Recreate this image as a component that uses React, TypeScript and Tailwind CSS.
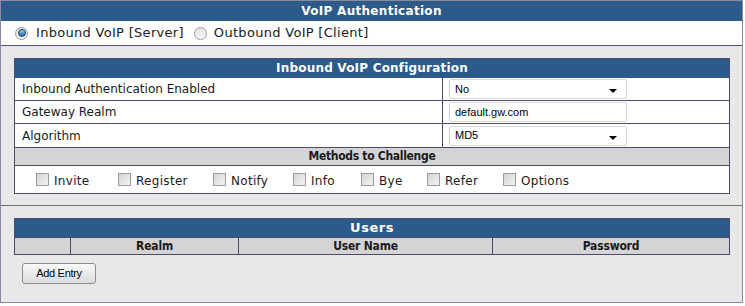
import React from 'react';

const methods = [
  { label: 'Invite', w: 'w-[82px]' },
  { label: 'Register', w: 'w-[95px]' },
  { label: 'Notify', w: 'w-[80px]' },
  { label: 'Info', w: 'w-[68px]' },
  { label: 'Bye', w: 'w-[66px]' },
  { label: 'Refer', w: 'w-[76px]' },
  { label: 'Options', w: 'w-[80px]' },
];

function Radio({ checked }: { checked?: boolean }) {
  return (
    <span className="relative inline-flex h-[13px] w-[13px] shrink-0 items-center justify-center rounded-full border border-[#9a9a9a] bg-gradient-to-b from-[#e2e2e2] to-[#fafafa]">
      {checked && (
        <span className="h-[8px] w-[8px] rounded-full border border-[#1c3c5c] bg-gradient-to-b from-[#8fd0f5] to-[#1f6fb0]" />
      )}
    </span>
  );
}

function Checkbox() {
  return (
    <span className="inline-block h-[13px] w-[13px] shrink-0 border border-[#9c9c9c] bg-gradient-to-br from-[#d4d4d4] to-[#f4f4f4]" />
  );
}

function Select({ value }: { value: string }) {
  return (
    <div className="flex h-[20px] w-[178px] items-center justify-between rounded-[2px] border border-[#d6d6d6] bg-white pl-[5px] pr-[9px] font-['Liberation_Sans',sans-serif] text-[11px] text-black">
      <span>{value}</span>
      <span className="mt-[4px] h-0 w-0 border-x-[4px] border-t-[4px] border-x-transparent border-t-black" />
    </div>
  );
}

export default function App() {
  return (
    <div className="w-[745px] h-[306px] bg-white font-['DejaVu_Sans',Verdana,sans-serif] text-[12px] text-[#1a1a1a]">
      <div className="w-[743px] h-[303px] border border-[#8b8ba0] bg-[#e8e8e8] flex flex-col">
        <div className="h-[20px] bg-[#2b5a8b] text-center font-bold tracking-[0.3px] text-white leading-[20px]">
          VoIP Authentication
        </div>
        <div className="flex h-[25px] items-center border-b border-[#52527a] bg-white pl-[14px] text-[13px] tracking-[0.3px]">
          <Radio checked />
          <span className="ml-[8px] mr-[10px]">Inbound VoIP [Server]</span>
          <Radio />
          <span className="ml-[7px]">Outbound VoIP [Client]</span>
        </div>

        <div className="h-[160px] border-b border-[#6e6e6e] px-[13px] pt-[12px]">
          <div className="w-[716px] border border-[#4b4b6e] bg-white">
            <div className="h-[19px] bg-[#2b5a8b] text-center font-bold tracking-[0.2px] leading-[19px] text-white">
              Inbound VoIP Configuration
            </div>
            <div className="grid grid-cols-[428px_1fr]">
              <div className="flex h-[23px] items-center border-b border-r border-[#4b4b6e] pl-[7px]">Inbound Authentication Enabled</div>
              <div className="flex h-[23px] items-center border-b border-[#4b4b6e] pl-[6px]"><Select value="No" /></div>
              <div className="flex h-[23px] items-center border-b border-r border-[#4b4b6e] pl-[7px]">Gateway Realm</div>
              <div className="flex h-[23px] items-center border-b border-[#4b4b6e] pl-[6px]">
                <div className="flex h-[20px] w-[178px] items-center rounded-[2px] border border-[#d6d6d6] bg-white pl-[5px] font-['Liberation_Sans',sans-serif] text-[11px] text-black">default.gw.com</div>
              </div>
              <div className="flex h-[23px] items-center border-r border-[#4b4b6e] pl-[7px]">Algorithm</div>
              <div className="flex h-[23px] items-center pl-[6px]"><Select value="MD5" /></div>
            </div>
            <div className="h-[19px] border-y border-[#4b4b6e] bg-[#d4d4d4] text-center font-['DejaVu_Sans_Condensed',sans-serif] font-bold tracking-[-0.3px] leading-[17px]">
              Methods to Challenge
            </div>
            <div className="flex h-[27px] items-center pl-[21px]">
              {methods.map((m) => (
                <label key={m.label} className={`flex items-center gap-[5px] ${m.w}`}>
                  <Checkbox />
                  <span className="mt-[3px] tracking-[0.3px]">{m.label}</span>
                </label>
              ))}
            </div>
          </div>
        </div>

        <div className="flex-1 px-[13px] pt-[12px]">
          <div className="w-[716px] border border-[#4b4b6e]">
            <div className="h-[18px] bg-[#2b5a8b] text-center text-[13px] font-bold tracking-[0.5px] leading-[18px] text-white">Users</div>
            <div className="grid grid-cols-[56px_168px_254px_1fr] border-t border-[#4b4b6e] bg-[#d4d4d4] text-center font-['DejaVu_Sans_Condensed',sans-serif] font-bold tracking-[-0.2px] leading-[16px]">
              <div className="border-r border-[#4b4b6e]">&nbsp;</div>
              <div className="border-r border-[#4b4b6e]">Realm</div>
              <div className="border-r border-[#4b4b6e]">User Name</div>
              <div>Password</div>
            </div>
          </div>
          <button className="ml-[8px] mt-[8px] h-[21px] w-[74px] rounded-[3px] border border-[#8e8e8e] bg-gradient-to-b from-[#fafafa] to-[#dcdcdc] font-['Liberation_Sans',sans-serif] text-[11px] text-black tracking-[-0.3px]">
            Add Entry
          </button>
        </div>
      </div>
    </div>
  );
}
